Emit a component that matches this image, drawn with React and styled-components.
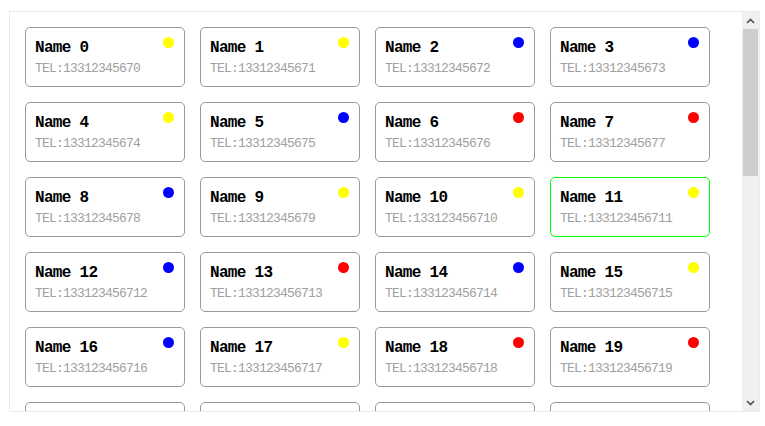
import React from "react";
import styled, { createGlobalStyle } from "styled-components";

const GlobalStyle = createGlobalStyle`
  body {
    margin: 0;
    background: #fff;
    font-family: "Liberation Mono", monospace;
  }
`;

const Page = styled.div`
  padding: 11px 0 0 9px;
`;

const Frame = styled.div`
  width: 751px;
  height: 401px;
  box-sizing: border-box;
  border: 1px solid #ebebeb;
  display: flex;
`;

const Viewport = styled.div`
  flex: 1;
  overflow: hidden;
  padding: 15px;
`;

const Grid = styled.div`
  display: grid;
  grid-template-columns: repeat(4, 160px);
  grid-auto-rows: 60px;
  gap: 15px;
`;

const Card = styled.div`
  position: relative;
  box-sizing: border-box;
  border: 1px solid ${(p) => (p.active ? "#00ff00" : "#9a9a9a")};
  border-radius: 5px;
  padding: 9px 9px 0;
`;

const Name = styled.div`
  font-size: 16px;
  font-weight: bold;
  letter-spacing: -0.7px;
  line-height: 22px;
  color: #000;
`;

const Tel = styled.div`
  margin-top: 1px;
  font-size: 13px;
  letter-spacing: -0.8px;
  line-height: 18px;
  color: #a0a0a0;
`;

const Dot = styled.span`
  position: absolute;
  top: 9px;
  right: 10px;
  width: 11px;
  height: 11px;
  border-radius: 50%;
  background: ${(p) => p.color};
`;

const ScrollBar = styled.div`
  width: 17px;
  background: #f0f0f0;
  display: flex;
  flex-direction: column;
  align-items: center;
`;

const Arrow = styled.div`
  height: 17px;
  width: 17px;
  display: flex;
  align-items: center;
  justify-content: center;
`;

const Thumb = styled.div`
  width: 15px;
  height: 147px;
  background: #cdcdcd;
`;

const Track = styled.div`
  flex: 1;
`;

const colors = {
  y: "#ffff00",
  b: "#0000ff",
  r: "#ff0000",
};

const pattern = "yybbybrrbyyybrbybyrr";

const items = Array.from({ length: 24 }, (_, i) => ({
  name: `Name ${i}`,
  tel: `TEL:1331234567${i}`,
  color: i < 20 ? colors[pattern[i]] : null,
}));

const Chevron = ({ up }) => (
  <svg width="9" height="6" viewBox="0 0 9 6">
    <path
      d={up ? "M1 5 L4.5 1.5 L8 5" : "M1 1 L4.5 4.5 L8 1"}
      fill="none"
      stroke="#505050"
      strokeWidth="1.6"
    />
  </svg>
);

export default function App() {
  return (
    <Page>
      <GlobalStyle />
      <Frame>
        <Viewport>
          <Grid>
            {items.map((it, i) => (
              <Card key={i} active={i === 11}>
                <Name>{it.name}</Name>
                <Tel>{it.tel}</Tel>
                {it.color && <Dot color={it.color} />}
              </Card>
            ))}
          </Grid>
        </Viewport>
        <ScrollBar>
          <Arrow>
            <Chevron up />
          </Arrow>
          <Thumb />
          <Track />
          <Arrow>
            <Chevron />
          </Arrow>
        </ScrollBar>
      </Frame>
    </Page>
  );
}
